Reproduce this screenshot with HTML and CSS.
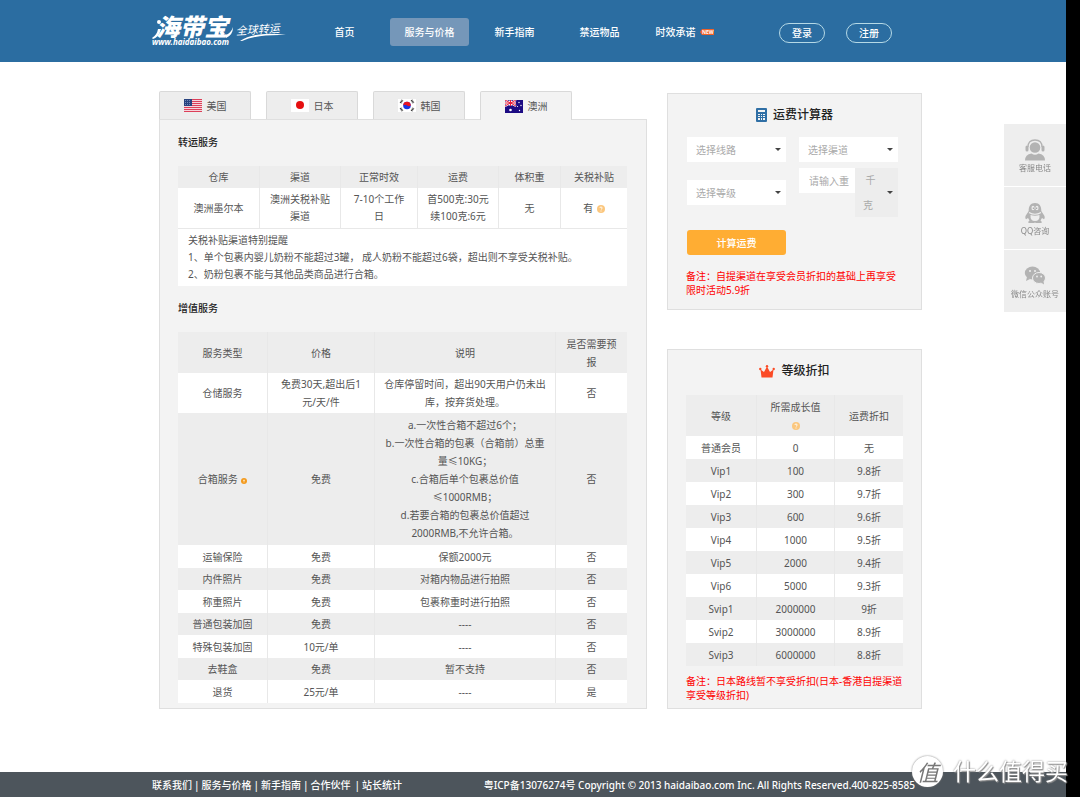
FILE: index.html
```html
<!DOCTYPE html>
<html lang="zh-CN">
<head>
<meta charset="utf-8">
<title>海带宝 - 服务与价格</title>
<link rel="stylesheet" href="styles.css">
</head>
<body>
<header class="site-header">
  <div class="container header-inner">
    <a class="logo" href="#" aria-label="海带宝全球转运">
      <svg width="136" height="48" viewBox="0 0 136 48">
        <text class="logo-name" x="4" y="29">海带宝</text>
        <text class="logo-url" x="0" y="38">www.haidaibao.com</text>
        <text class="logo-tag" x="84" y="28" transform="rotate(-4 84 28)">全球转运</text>
        <path d="M0 31 Q5 28 6 22 L9 22 Q7 30 1 32Z M74 28 Q79 26 81 20 Q81 28 74 31Z M88 34 Q103 24 134 28 Q106 27 90 34Z" fill="#fff"/>
        <circle cx="7" cy="15" r="2" fill="#fff"/>
      </svg>
    </a>
    <nav class="nav">
      <a href="#">首页</a>
      <a href="#" class="current">服务与价格</a>
      <a href="#">新手指南</a>
      <a href="#">禁运物品</a>
      <a href="#">时效承诺<svg class="new" width="14" height="6" viewBox="0 0 14 6"><path d="M0 3 2 0H14V6H2Z" fill="#f0622a"/><text x="2" y="5">NEW</text></svg></a>
    </nav>
    <div class="account">
      <button type="button">登录</button>
      <button type="button">注册</button>
    </div>
  </div>
</header>

<main class="container content">
  <section class="services">
    <div class="tabs" role="tablist">
      <button class="tab" type="button" role="tab" aria-selected="false">
        <svg width="18" height="13" viewBox="0 0 18 13"><path fill="#f6d5dc" d="M0 0h18v13H0z"/><path stroke="#dc4059" d="M0 .5h18M0 2.5h18M0 4.5h18M0 6.5h18M0 8.5h18M0 10.5h18M0 12.5h18"/><path fill="#29437f" d="M0 0h8v7H0z"/><path stroke="#7488b5" stroke-dasharray="1 1" d="M1 1.5h6M1 3.5h6M1 5.5h6"/></svg>美国</button>
      <button class="tab" type="button" role="tab" aria-selected="false">
        <svg width="18" height="13" viewBox="0 0 18 13"><path fill="#fff" d="M0 0h18v13H0z"/><circle cx="9" cy="6" r="4" fill="#e60f10"/></svg>日本</button>
      <button class="tab" type="button" role="tab" aria-selected="false">
        <svg width="18" height="13" viewBox="0 0 18 13"><path fill="#fff" d="M0 0h18v13H0z"/><circle cx="9" cy="6.5" r="3.8" fill="#1836e4"/><path fill="#ea1320" d="M5.2 6.500A3.800 3.800 0 0 1 12.800 6.500Q11 8 9 6.500T5.200 6.500Z"/><path stroke="#333" stroke-width="2" stroke-dasharray="1 .5" d="m2.500 4 2-3m-2 8 2 3m9-11 2 3m-2 8 2-3"/></svg>韩国</button>
      <button class="tab active" type="button" role="tab" aria-selected="true">
        <svg width="18" height="13" viewBox="0 0 18 13"><path fill="#1c0b83" d="M0 0h18v13H0z"/><path stroke="#fff" stroke-width="2" d="m0 0 11 6M0 6 11 0M5.500 0v6M0 3h11"/><path stroke="#e41e3d" d="m0 0 11 6M0 6 11 0M5.500 0v6M0 3h11"/><g fill="#fff"><circle cx="5.500" cy="10" r="1.300"/><circle cx="14" cy="2.500" r=".7"/><circle cx="16" cy="5.500" r=".7"/><circle cx="12.500" cy="6.500" r=".6"/><circle cx="14.500" cy="10.500" r=".7"/></g></svg>澳洲</button>
    </div>
    <div class="panel service-panel">
      <h2>转运服务</h2>
      <table class="data transfer">
        <colgroup><col class="t1"><col class="t2"><col class="t3"><col class="t2"><col class="t4"><col class="t5"></colgroup>
        <thead><tr><th>仓库</th><th>渠道</th><th>正常时效</th><th>运费</th><th>体积重</th><th>关税补贴</th></tr></thead>
        <tbody>
          <tr><td>澳洲墨尔本</td><td>澳洲关税补贴渠道</td><td>7-10个工作日</td><td>首500克:30元<br>续100克:6元</td><td>无</td>
          <td>有 <svg class="help" width="8" height="8" viewBox="0 0 8 8"><circle cx="4" cy="4" r="4" fill="#fbc77e"/><path d="M2.800 3Q3 2 4 2t1.200 1Q5.200 3.600 4 4.500M4 5.500v1" fill="none" stroke="#fff" stroke-width=".9"/></svg></td></tr>
          <tr><td colspan="6" class="notice">关税补贴渠道特别提醒<br>1、单个包裹内婴儿奶粉不能超过3罐， 成人奶粉不能超过6袋，超出则不享受关税补贴。<br>2、奶粉包裹不能与其他品类商品进行合箱。</td></tr>
        </tbody>
      </table>
      <h2>增值服务</h2>
      <table class="data striped extra">
        <colgroup><col class="e1"><col class="e2"><col class="e3"><col class="e4"></colgroup>
        <thead><tr><th>服务类型</th><th>价格</th><th>说明</th><th>是否需要预报</th></tr></thead>
        <tbody>
          <tr><td>仓储服务</td><td>免费30天,超出后1元/天/件</td><td>仓库停留时间，超出90天用户仍未出库，按弃货处理。</td><td>否</td></tr>
          <tr class="tall"><td>合箱服务 <svg class="help" width="6" height="6" viewBox="0 0 6 6"><circle cx="3" cy="3" r="3" fill="#f39a1e"/><path d="M3 1.500v3M2 2.500h2" stroke="#fde3b8" stroke-width=".8"/></svg></td><td>免费</td><td>a.一次性合箱不超过6个；<br>b.一次性合箱的包裹（合箱前）总重<br>量≤10KG；<br>c.合箱后单个包裹总价值<br>≤1000RMB；<br>d.若要合箱的包裹总价值超过<br>2000RMB,不允许合箱。</td><td>否</td></tr>
          <tr><td>运输保险</td><td>免费</td><td>保额2000元</td><td>否</td></tr>
          <tr><td>内件照片</td><td>免费</td><td>对箱内物品进行拍照</td><td>否</td></tr>
          <tr><td>称重照片</td><td>免费</td><td>包裹称重时进行拍照</td><td>否</td></tr>
          <tr><td>普通包装加固</td><td>免费</td><td>----</td><td>否</td></tr>
          <tr><td>特殊包装加固</td><td>10元/单</td><td>----</td><td>否</td></tr>
          <tr><td>去鞋盒</td><td>免费</td><td>暂不支持</td><td>否</td></tr>
          <tr><td>退货</td><td>25元/单</td><td>----</td><td>是</td></tr>
        </tbody>
      </table>
    </div>
  </section>

  <aside class="sidebar">
    <section class="panel card calculator">
      <h3><svg width="11" height="14" viewBox="0 0 11 14"><rect width="11" height="14" rx="1" fill="#2f6fa5"/><path fill="#f3f3f3" d="M2 2h7v2H2zM2 6h2v1H2zM5 6h1v1H5zM7 6h2v1H7zM2 8h2v1H2zM5 8h1v1H5zM7 8h2v1H7zM2 10h2v2H2zM5 10h1v2H5zM7 10h2v2H7z"/></svg>运费计算器</h3>
      <form class="calc-form">
        <select aria-label="选择线路"><option>选择线路</option></select>
        <select aria-label="选择渠道"><option>选择渠道</option></select>
        <select aria-label="选择等级"><option>选择等级</option></select>
        <div class="weight">
          <input type="text" aria-label="重量" placeholder="请输入重量">
          <button type="button" class="unit" aria-haspopup="listbox">&nbsp;千<br>克</button>
        </div>
        <button type="button" class="submit">计算运费</button>
      </form>
      <p class="remark">备注：自提渠道在享受会员折扣的基础上再享受限时活动5.9折</p>
    </section>
    <section class="panel card levels">
      <h3><svg width="16" height="13" viewBox="0 0 16 13"><path fill="#fb4b26" d="M2.500 12.500 1.500 4.500 5 7 8 1.500 11 7l3.500-2.500-1 8Z"/><g fill="#fb4b26"><circle cx="1.300" cy="4" r="1.200"/><circle cx="8" cy="1.300" r="1.200"/><circle cx="14.700" cy="4" r="1.200"/></g></svg>等级折扣</h3>
      <table class="data striped discount">
        <colgroup><col class="d1"><col class="d2"><col class="d3"></colgroup>
        <thead><tr><th>等级</th><th>所需成长值<br><svg class="help" width="8" height="8" viewBox="0 0 8 8"><circle cx="4" cy="4" r="4" fill="#fbc77e"/><path d="M2.800 3Q3 2 4 2t1.200 1Q5.200 3.600 4 4.500M4 5.500v1" fill="none" stroke="#fff" stroke-width=".9"/></svg></th><th>运费折扣</th></tr></thead>
        <tbody>
          <tr><td>普通会员</td><td>0</td><td>无</td></tr>
          <tr><td>Vip1</td><td>100</td><td>9.8折</td></tr>
          <tr><td>Vip2</td><td>300</td><td>9.7折</td></tr>
          <tr><td>Vip3</td><td>600</td><td>9.6折</td></tr>
          <tr><td>Vip4</td><td>1000</td><td>9.5折</td></tr>
          <tr><td>Vip5</td><td>2000</td><td>9.4折</td></tr>
          <tr><td>Vip6</td><td>5000</td><td>9.3折</td></tr>
          <tr><td>Svip1</td><td>2000000</td><td>9折</td></tr>
          <tr><td>Svip2</td><td>3000000</td><td>8.9折</td></tr>
          <tr><td>Svip3</td><td>6000000</td><td>8.8折</td></tr>
        </tbody>
      </table>
      <p class="remark">备注：日本路线暂不享受折扣(日本-香港自提渠道享受等级折扣)</p>
    </section>
  </aside>
</main>

<footer class="site-footer">
  <div class="container footer-inner">
    <div class="footer-links">
      <a href="#">联系我们</a><span>|</span><a href="#">服务与价格</a><span>|</span><a href="#">新手指南</a><span>|</span><a href="#">合作伙伴</a><span class="last">|</span><a href="#">站长统计</a>
    </div>
    <p>粤ICP备13076274号 Copyright © 2013 haidaibao.com Inc. All Rights Reserved.400-825-8585</p>
  </div>
</footer>

<div class="edge"></div>

<div class="contact">
  <a href="#"><svg width="22" height="22" viewBox="0 0 22 22"><path d="M4 8Q4 1 11 1t7 7" fill="none" stroke="#b3b3b3" stroke-width="1.300"/><circle cx="11" cy="8.500" r="5.300" fill="#b3b3b3"/><rect x="1.500" y="6.500" width="3" height="6" rx="1.500" fill="#b3b3b3"/><rect x="17.500" y="6.500" width="3" height="6" rx="1.500" fill="#b3b3b3"/><path d="M1 21.500Q1 15.500 7.500 14.500 11 17 14.500 14.500 21 15.500 21 21.500Z" fill="#b3b3b3"/></svg>客服电话</a>
  <a href="#"><svg width="22" height="22" viewBox="0 0 22 22"><path d="M11 1C6.500 1 4.500 4.500 4.700 9L1.500 14q-.7 2.500.5 3.200l2-1.200 1.500 2.500q-2 1-1 2.500h5.500l1-.5 1 .5H17.500q1-1.500-1-2.500L18 16l2 1.200q1.200-.7.500-3.200L17.300 9C17.500 4.500 15.500 1 11 1Z" fill="#b3b3b3"/><ellipse cx="9" cy="6" rx="1.500" ry="2.200" fill="#eee"/><ellipse cx="13" cy="6" rx="1.500" ry="2.200" fill="#eee"/><path d="M9.300 5.500v1.500m3.400-1.500v1.500" stroke="#999"/><path d="M5 10.500q6 3.500 12 0" fill="none" stroke="#eee" stroke-width="1.200"/><path d="M6.500 13q4.500 1.500 9 0 .5 6-4.500 6t-4.500-6Z" fill="#eee"/></svg>QQ咨询</a>
  <a href="#"><svg width="22" height="22" viewBox="0 0 22 22"><ellipse cx="8.500" cy="8" rx="7.700" ry="6.500" fill="#b3b3b3"/><path d="m3 12-1 4 4-2Z" fill="#b3b3b3"/><ellipse cx="15" cy="13" rx="6.500" ry="5.500" fill="#b3b3b3" stroke="#eee"/><path d="m17 17.500 3 2-.5-3.500Z" fill="#b3b3b3"/><g fill="#eee"><circle cx="6" cy="6" r="1"/><circle cx="11" cy="6" r="1"/><circle cx="13" cy="11.500" r=".9"/><circle cx="17.200" cy="11.500" r=".9"/></g></svg>微信公众账号</a>
</div>

<div class="watermark"><span class="seal">值</span><span class="mark-text">什么值得买</span></div>
</body>
</html>
```
FILE: styles.css
```css
* { box-sizing: border-box; }
body {
  margin: 0;
  min-height: 100vh;
  display: flex;
  flex-direction: column;
  background: #fff;
  color: #555;
  font: 10px/18px "Noto Sans", "Noto Sans CJK SC", sans-serif;
  text-spacing-trim: space-all;
}
h2, h3, p { margin: 0; }
a { color: inherit; text-decoration: none; }
button, input, select { font: inherit; border: 0; margin: 0; padding: 0; border-radius: 0; }
svg { flex: none; }
.container { width: 100%; max-width: 776px; margin: 0 auto; }

.site-header { background: #2b6da1; color: #fff; }
.header-inner { display: flex; align-items: center; height: 62px; }
.logo { display: flex; margin-right: 17px; }
.logo text { fill: #fff; font-style: italic; font-weight: 700; }
.logo .logo-name { font-size: 24px; font-weight: 900; }
.logo .logo-url { font-size: 8px; }
.logo .logo-tag { font-size: 11px; font-weight: 400; }
.nav { display: flex; gap: 6px; padding-top: 2px; font-weight: 500; }
.nav a {
  display: flex;
  align-items: center;
  justify-content: center;
  gap: 4px;
  width: 79px;
  height: 28px;
  border-radius: 3px;
}
.nav .current { background: #7597b9; }
.new text { font-size: 5px; font-weight: 700; fill: #fff; }
.account { display: flex; gap: 21px; margin-left: auto; margin-right: 36px; padding-top: 3px; }
.account button {
  width: 46px;
  height: 20px;
  border: 1px solid #b5d9e6;
  border-radius: 10px;
  background: transparent;
  color: #fff;
  font-weight: 500;
  line-height: 16px;
}

.content {
  display: grid;
  grid-template-columns: minmax(0, 488fr) minmax(0, 255fr);
  align-items: start;
  gap: 20px;
  padding: 29px 6px 20px 7px;
  flex: 1;
}
.panel { background: #f3f3f3; border: 1px solid #dfdfdf; }
.tabs { display: flex; gap: 15px; }
.tab {
  display: flex;
  align-items: center;
  justify-content: center;
  gap: 5px;
  width: 92px;
  height: 28px;
  border: 1px solid #d9d9d9;
  border-bottom: 0;
  border-radius: 2px 2px 0 0;
  background: #ededed;
  color: #555;
}
.tab.active { background: #f3f3f3; height: 29px; margin-bottom: -1px; position: relative; }
.service-panel { padding: 13px 19px 5px 18px; }
.service-panel h2 {
  margin-bottom: 15px;
  color: #222;
  font-size: 10px;
  font-weight: 500;
  line-height: 18px;
}
.service-panel .data + h2 { margin-top: 13px; }

.data { width: 100%; border-collapse: separate; border-spacing: 0; table-layout: fixed; text-align: center; }
.data th { background: #ededed; font-weight: 400; }
.data th, .data td { padding: 2px 8px; border-right: 1px solid #e8e8e8; }
.data th:last-child, .data td:last-child { border-right: 0; }
.data td { background: #fff; }
.striped tbody tr:nth-child(even) td { background: #ededed; }
.help { margin-left: 1px; vertical-align: -1px; }
.transfer td { line-height: 17px; border-bottom: 1px solid #e8e8e8; }
.transfer tbody tr:first-child { height: 41px; }
.transfer .notice { padding: 3px 10px; text-align: left; border-bottom: 0; }
.t1 { width: 82px; } .t2 { width: 81px; } .t3 { width: 77px; } .t4 { width: 62px; } .t5 { width: 66px; }
.e1 { width: 90px; } .e2 { width: 107px; } .e3 { width: 181px; } .e4 { width: 71px; }
.d1 { width: 71px; } .d2 { width: 78px; } .d3 { width: 68px; }
.data thead tr { height: 41px; }
.transfer thead tr { height: 22px; }
.extra tbody tr { height: 23px; }
.extra tbody tr:nth-child(even) { height: 22px; }
.extra tbody .tall { height: 132px; }
.extra tbody .tall:nth-child(even) { height: 132px; }
.discount tbody tr { height: 23px; }

.sidebar { display: flex; flex-direction: column; gap: 39px; padding-top: 2px; }
.card { padding: 11px 18px 6px; }
.card h3 {
  display: flex;
  align-items: center;
  justify-content: center;
  gap: 6px;
  color: #222;
  font-size: 12px;
  font-weight: 500;
  line-height: 20px;
}
.calculator { padding-bottom: 12px; }
.calc-form {
  display: grid;
  grid-template-columns: minmax(0, 1fr) minmax(0, 1fr);
  align-items: center;
  gap: 6px 13px;
  margin: 12px 5px 14px 1px;
}
.calc-form select, .unit {
  appearance: none;
  color: #aaa;
  background: #fff url("data:image/svg+xml,%3Csvg xmlns='http://www.w3.org/2000/svg' width='6' height='3'%3E%3Cpath d='M0 0h6L3 3z' fill='%23444'/%3E%3C/svg%3E") no-repeat right 5px center;
}
.calc-form select { width: 100%; height: 25px; padding: 0 9px; }
.weight { display: flex; align-items: flex-start; }
.weight input { flex: 1; min-width: 0; height: 25px; padding: 0 6px 0 10px; background: #fff; }
.weight input::placeholder { color: #aaa; opacity: 1; }
.calc-form .unit { width: 43px; height: 49px; padding-left: 8px; text-align: left; line-height: 25px; background-color: #ededed; }
.submit { height: 25px; margin-top: 7px; border-radius: 3px; background: #ffad33; color: #fff; font-weight: 500; }
.remark { color: #f00; line-height: 14px; }
.discount { margin: 14px 0 8px; }

.site-footer { background: #4d555c; color: #fff; font-weight: 500; }
.footer-inner { display: flex; align-items: center; justify-content: space-between; height: 25px; padding-right: 13px; }
.footer-links { display: flex; gap: 2px; }
.footer-links .last { padding-left: 2px; }

.edge { position: fixed; top: 0; right: 0; bottom: 0; width: 14px; background: #000; }
.contact { position: fixed; top: 124px; right: 14px; width: 62px; display: grid; gap: 1px; }
.contact a {
  display: flex;
  flex-direction: column;
  align-items: center;
  height: 62px;
  padding-top: 15px;
  background: #eee;
  color: #888;
  font-size: 8px;
  line-height: 14px;
}
.watermark {
  position: fixed;
  right: 12px;
  bottom: 10px;
  display: flex;
  align-items: center;
  gap: 10px;
  color: #fff;
  text-shadow: 0 0 2px #777, 1px 1px 1px #999;
}
.seal {
  display: grid;
  place-items: center;
  width: 31px;
  height: 31px;
  border-radius: 50%;
  background: #fff;
  box-shadow: 0 0 2px #777;
  color: #777;
  font-size: 22px;
  font-style: italic;
  text-shadow: none;
}
.mark-text { font-size: 23px; line-height: 31px; }
```
